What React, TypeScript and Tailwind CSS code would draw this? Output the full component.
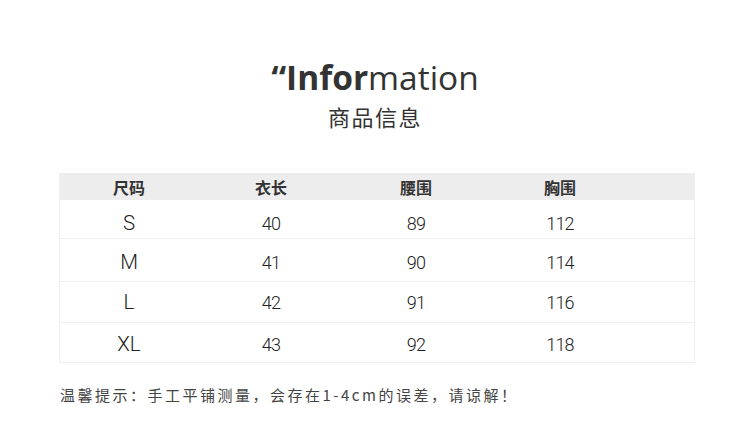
const rows = [
  { size: "S", length: "40", waist: "89", chest: "112", h: "h-[38px] pt-[8px]" },
  { size: "M", length: "41", waist: "90", chest: "114", h: "h-[43px] pt-[5px]" },
  { size: "L", length: "42", waist: "91", chest: "116", h: "h-[41px] pt-0" },
  { size: "XL", length: "43", waist: "92", chest: "118", h: "h-[40px] pt-[4px]" },
];

const cjk = { fontFamily: '"Noto Sans CJK SC", "Noto Sans", sans-serif' };

export default function App() {
  return (
    <div className="w-[750px] h-[438px] bg-white text-[#333] overflow-hidden" style={cjk}>
      <div className="flex flex-col items-center pt-[54px]">
        <h1
          className="text-[33.5px] leading-[46px] text-[#333]"
          style={{ fontFamily: '"Open Sans", sans-serif' }}
        >
          <span className="font-bold">“Infor</span>
          <span className="font-normal">mation</span>
        </h1>
        <div className="text-[22px] leading-[28px] mt-[2px] tracking-[1.5px]">商品信息</div>
      </div>

      <div className="mx-[59px] mt-[43px] w-[636px] border-x border-b border-[#efefef]">
        <div className="flex h-[27px] items-center bg-[#ededed] text-[16px] font-bold">
          <div className="w-[138px] text-center">尺码</div>
          <div className="w-[146px] text-center">衣长</div>
          <div className="w-[144px] text-center">腰围</div>
          <div className="w-[144px] text-center">胸围</div>
        </div>
        {rows.map((r, i) => (
          <div
            key={r.size}
            className={`flex items-center ${r.h} ${i > 0 ? "border-t border-[#efefef]" : ""} text-[18px] font-light tracking-[-0.8px] text-[#222]`}
            style={{ fontFamily: '"Roboto", "Noto Sans", sans-serif' }}
          >
            <div className="w-[138px] text-center text-[20.5px] tracking-normal">{r.size}</div>
            <div className="w-[146px] text-center">{r.length}</div>
            <div className="w-[144px] text-center">{r.waist}</div>
            <div className="w-[144px] text-center">{r.chest}</div>
          </div>
        ))}
      </div>

      <div className="ml-[60px] mt-[21px] text-[15px] leading-[22px] tracking-[2.5px] text-[#444]">
        温馨提示：手工平铺测量，会存在1-4cm的误差，请谅解！
      </div>
    </div>
  );
}
